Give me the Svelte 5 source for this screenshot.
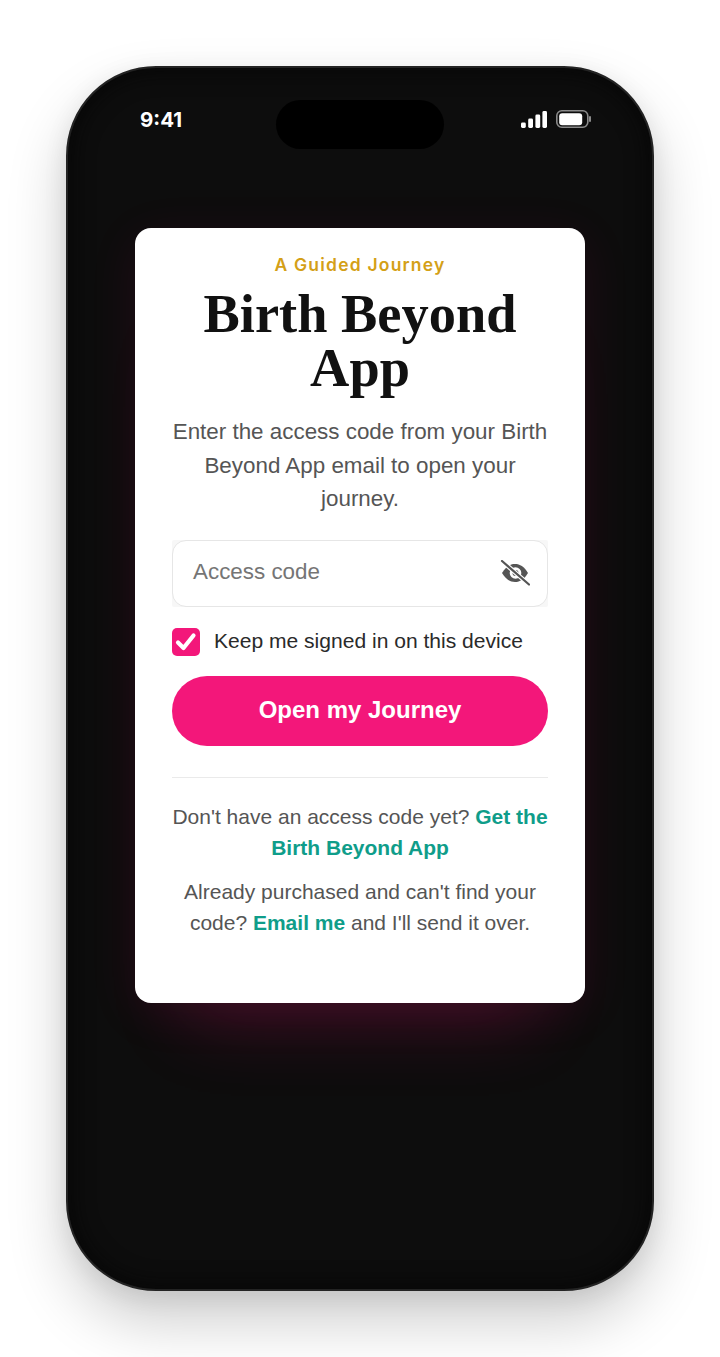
<script>
    let keepSignedIn = true;
</script>

<style>
    :global(body) {
        background: #fff;
        font-family: "Liberation Sans", Arial, sans-serif;
    }

    .page {
        padding: 66px 66px 66px;
    }

    .phone {
        position: relative;
        box-sizing: border-box;
        height: 1225px;
        border: 2px solid #232323;
        border-radius: 90px;
        background: #0d0d0d;
        box-shadow: 0 30px 60px rgba(0, 0, 0, 0.2), 0 6px 24px rgba(0, 0, 0, 0.08), inset 0 0 24px #050505;
        padding: 0 67px;
    }

    .status {
        display: flex;
        justify-content: space-between;
        align-items: center;
        height: 36px;
        padding-top: 33px;
        padding-left: 5px;
        color: #fff;
    }

    .time {
        font-family: Inter, sans-serif;
        font-size: 20.5px;
        font-weight: 700;
    }

    .icons {
        display: flex;
        align-items: center;
        gap: 9px;
        margin-right: -6px;
    }

    .island {
        position: absolute;
        top: 32px;
        left: 208px;
        width: 168px;
        height: 49px;
        border-radius: 25px;
        background: #000;
    }

    .card {
        box-sizing: border-box;
        margin-top: 91px;
        height: 775px;
        background: #fff;
        border-radius: 16px;
        padding: 25px 37px 0;
        text-align: center;
        box-shadow: 0 70px 70px -50px rgba(243, 23, 122, 0.19), 0 10px 50px rgba(243, 23, 122, 0.09);
    }

    .eyebrow {
        margin: 0;
        font-family: Inter, sans-serif;
        font-size: 17.5px;
        line-height: 24px;
        font-weight: 600;
        letter-spacing: 1.2px;
        color: #d4a017;
    }

    h1 {
        margin: 10px -20px 0;
        font-family: "Liberation Serif", serif;
        font-size: 54.4px;
        line-height: 54px;
        font-weight: 700;
        color: #111;
    }

    .lede {
        margin: 20px 0 0;
        font-size: 22.4px;
        line-height: 33.5px;
        color: #555;
    }

    .well {
        margin-top: 24px;
        border-radius: 2px;
        background: #f7f7f7;
    }

    .field {
        box-sizing: border-box;
        display: flex;
        align-items: center;
        justify-content: space-between;
        height: 67px;
        padding: 0 17px 0 20px;
        border: 1.5px solid #e6e6e6;
        border-radius: 14px;
        background: #fff;
        font-size: 22.4px;
        color: #757575;
    }

    .field span {
        padding-bottom: 2px;
    }

    .keep {
        display: flex;
        align-items: center;
        gap: 14px;
        margin-top: 21px;
        font-size: 21.05px;
        color: #2a2a2a;
    }

    .keep .label {
        padding-bottom: 2px;
    }

    .box {
        flex: none;
        display: flex;
        align-items: center;
        justify-content: center;
        width: 28px;
        height: 28px;
        border-radius: 5px;
        background: #f3177a;
    }

    .cta {
        display: block;
        box-sizing: border-box;
        width: 100%;
        height: 70px;
        margin-top: 20px;
        padding: 0 0 2px;
        border: 0;
        border-radius: 35px;
        background: #f3177a;
        color: #fff;
        font-family: inherit;
        font-size: 24px;
        font-weight: 700;
    }

    .rule {
        height: 1px;
        margin-top: 31px;
        background: #eaeaea;
    }

    .note {
        margin: 0;
        font-size: 21px;
        line-height: 31px;
        color: #555;
    }

    .note.first {
        margin-top: 23px;
    }

    .note.second {
        margin-top: 13px;
    }

    .note a {
        color: #0f9d8a;
        font-weight: 700;
        text-decoration: none;
    }
</style>

<div class="page">
    <div class="phone">
        <div class="island"></div>
        <div class="status">
            <span class="time">9:41</span>
            <span class="icons">
                <svg width="26" height="17" viewBox="0 0 26 17" fill="#fff">
                    <rect x="0" y="11.500" width="4.800" height="5.500" rx="1.400" />
                    <rect x="7.200" y="7.500" width="4.800" height="9.500" rx="1.400" />
                    <rect x="14.400" y="3.500" width="4.800" height="13.500" rx="1.400" />
                    <rect x="21.400" y="0" width="4.600" height="17" rx="1.400" />
                </svg>
                <svg width="35" height="18" viewBox="0 0 35 18">
                    <rect x="0.800" y="0.800" width="31" height="16.400" rx="5" fill="none" stroke="#8a8a8a" stroke-width="1.600" />
                    <rect x="3.200" y="3.200" width="23" height="12" rx="3" fill="#fff" />
                    <rect x="33" y="6" width="2" height="6" rx="1" fill="#8a8a8a" />
                </svg>
            </span>
        </div>

        <div class="card">
            <p class="eyebrow">A Guided Journey</p>
            <h1>Birth Beyond<br />App</h1>
            <p class="lede">Enter the access code from your Birth Beyond App email to open your journey.</p>

            <div class="well">
                <div class="field">
                    <span>Access code</span>
                    <svg width="30" height="26" viewBox="0 0 30 26">
                        <path d="M2 13 C6 6.500 10 4 15 4 C20 4 24 6.500 28 13 C24 19.500 20 22 15 22 C10 22 6 19.500 2 13 Z" fill="#555" />
                        <circle cx="15.500" cy="13" r="5.800" fill="#fff" />
                        <circle cx="15.500" cy="13" r="3" fill="#555" />
                        <path d="M2 1 L29 24.500" stroke="#fff" stroke-width="4.500" />
                        <path d="M2 1 L29 24.500" stroke="#555" stroke-width="2.200" stroke-linecap="round" />
                    </svg>
                </div>
            </div>

            <div class="keep">
                <span class="box">
                    {#if keepSignedIn}
                        <svg width="22" height="20" viewBox="0 0 22 20">
                            <path d="M3 10.500 L8.500 16 L18.500 3.500" fill="none" stroke="#fff" stroke-width="4.200" stroke-linecap="round" stroke-linejoin="round" />
                        </svg>
                    {/if}
                </span>
                <span class="label">Keep me signed in on this device</span>
            </div>

            <button class="cta">Open my Journey</button>

            <div class="rule"></div>

            <p class="note first">Don't have an access code yet? <a href="#get">Get the Birth Beyond App</a></p>
            <p class="note second">Already purchased and can't find your code? <a href="#email">Email me</a> and I'll send it over.</p>
        </div>
    </div>
</div>
